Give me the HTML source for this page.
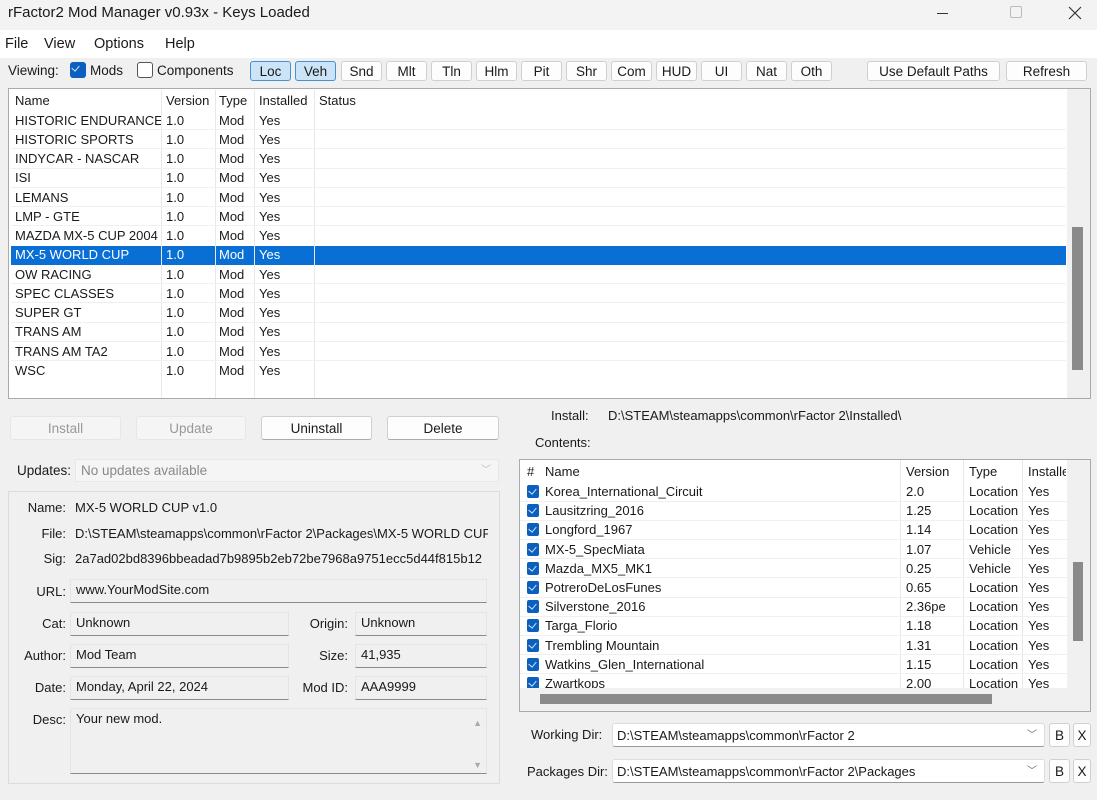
<!DOCTYPE html><html><head><meta charset="utf-8"><style>
*{box-sizing:border-box;margin:0;padding:0}
body{width:1097px;height:800px;background:#f0f0f0;font-family:"Liberation Sans",sans-serif;font-size:13px;color:#1a1a1a;position:relative;overflow:hidden}
.a{position:absolute;white-space:nowrap}
.btn{position:absolute;background:#fdfdfd;border:1px solid #d0d0d0;border-radius:3px;text-align:center;font-size:13.5px}
.tb{height:20px;top:61px;line-height:19px;width:41px}
.fld{position:absolute;background:#f0f0f0;border:1px solid #e4e4e4;border-bottom:1px solid #8a8a8a;padding-left:5px;line-height:20px}
.lbl{position:absolute;text-align:right;white-space:nowrap}
.cb{position:absolute;width:12px;height:13px;background:#0a5fbf;border-radius:2px}
.cb:after{content:"";position:absolute;left:3px;top:2px;width:4px;height:6px;border:solid #cfe3fa;border-width:0 1.2px 1.2px 0;transform:rotate(40deg)}
</style></head><body>
<div class="a" style="left:0;top:0;width:1097px;height:30px;background:#f3f3f3"></div>
<div class="a" style="left:8px;top:4px;font-size:15px">rFactor2 Mod Manager v0.93x - Keys Loaded</div>
<div class="a" style="left:937px;top:13px;width:11px;height:1px;background:#333"></div>
<div class="a" style="left:1010px;top:6px;width:12px;height:12px;border:1px solid #bbb;border-radius:2px"></div>
<svg class="a" style="left:1068px;top:6px" width="14" height="14"><path d="M1 1L13 13M13 1L1 13" stroke="#333" stroke-width="1.2"/></svg>
<div class="a" style="left:0;top:30px;width:1097px;height:28px;background:#fff"></div>
<div class="a" style="left:5px;top:36px;font-size:14.5px">File</div>
<div class="a" style="left:44px;top:36px;font-size:14.5px">View</div>
<div class="a" style="left:94px;top:36px;font-size:14.5px">Options</div>
<div class="a" style="left:165px;top:36px;font-size:14.5px">Help</div>
<div class="a" style="left:8px;top:63px;font-size:13.5px">Viewing:</div>
<div class="cb" style="left:70px;top:62px;width:16px;height:16px;border-radius:3px"></div>
<div class="a" style="left:90px;top:63px;font-size:13.5px">Mods</div>
<div class="a" style="left:137px;top:62px;width:16px;height:16px;border:1px solid #555;border-radius:3px;background:#fff"></div>
<div class="a" style="left:157px;top:63px;font-size:13.5px">Components</div>
<div class="btn tb" style="left:250px;background:#cce4f7;border-color:#4a8fd0">Loc</div>
<div class="btn tb" style="left:295px;background:#cce4f7;border-color:#4a8fd0">Veh</div>
<div class="btn tb" style="left:341px">Snd</div><div class="btn tb" style="left:386px">Mlt</div><div class="btn tb" style="left:431px">Tln</div><div class="btn tb" style="left:476px">Hlm</div><div class="btn tb" style="left:521px">Pit</div><div class="btn tb" style="left:566px">Shr</div><div class="btn tb" style="left:611px">Com</div><div class="btn tb" style="left:656px">HUD</div><div class="btn tb" style="left:701px">UI</div><div class="btn tb" style="left:746px">Nat</div><div class="btn tb" style="left:791px">Oth</div>
<div class="btn tb" style="left:867px;width:133px">Use Default Paths</div>
<div class="btn tb" style="left:1006px;width:81px">Refresh</div>

<div class="a" style="left:8px;top:88px;width:1083px;height:311px;background:#fff;border:1px solid #aaa"></div>
<div class="a" style="left:1067px;top:89px;width:23px;height:309px;background:#f0f0f0"></div>
<div class="a" style="left:1072px;top:227px;width:11px;height:143px;background:#8a8a8a"></div>
<div class="a" style="left:11px;top:246px;width:1055px;height:19px;background:#0a6fd4"></div>
<div class="a" style="left:161px;top:90px;width:1px;height:308px;background:#e8e8e8"></div>
<div class="a" style="left:215px;top:90px;width:1px;height:308px;background:#e8e8e8"></div>
<div class="a" style="left:254px;top:90px;width:1px;height:308px;background:#e8e8e8"></div>
<div class="a" style="left:314px;top:90px;width:1px;height:308px;background:#e8e8e8"></div>
<div id="ml"></div>

<div class="btn" style="left:10px;top:416px;width:111px;height:24px;line-height:23px;color:#999;background:#f5f5f5;border-color:#e6e6e6">Install</div>
<div class="btn" style="left:136px;top:416px;width:110px;height:24px;line-height:23px;color:#999;background:#f5f5f5;border-color:#e6e6e6">Update</div>
<div class="btn" style="left:261px;top:416px;width:111px;height:24px;line-height:23px;border-bottom-color:#aaa">Uninstall</div>
<div class="btn" style="left:387px;top:416px;width:112px;height:24px;line-height:23px;border-bottom-color:#aaa">Delete</div>
<div class="a" style="left:17px;top:463px;font-size:13.5px">Updates:</div>
<div class="a" style="left:75px;top:459px;width:424px;height:23px;background:#f5f5f5;border:1px solid #e8e8e8;color:#888;padding-left:5px;line-height:22px;font-size:13.5px">No updates available<span style="position:absolute;right:7px;color:#bbb;font-size:10px">﹀</span></div>
<div class="a" style="left:8px;top:491px;width:492px;height:293px;border:1px solid #dcdcdc"></div>
<div class="lbl" style="left:10px;width:56px;top:500px">Name:</div><div class="a" style="left:75px;top:500px">MX-5 WORLD CUP v1.0</div>
<div class="lbl" style="left:10px;width:56px;top:526px">File:</div><div class="a" style="left:75px;top:526px;width:413px;overflow:hidden">D:\STEAM\steamapps\common\rFactor 2\Packages\MX-5 WORLD CUP</div>
<div class="lbl" style="left:10px;width:56px;top:551px">Sig:</div><div class="a" style="left:75px;top:551px;width:413px;overflow:hidden">2a7ad02bd8396bbeadad7b9895b2eb72be7968a9751ecc5d44f815b12</div>
<div class="lbl" style="left:10px;width:56px;top:584px">URL:</div><div class="fld" style="left:70px;top:579px;width:417px;height:24px">www.YourModSite.com</div>
<div class="lbl" style="left:10px;width:56px;top:616px">Cat:</div><div class="fld" style="left:70px;top:612px;width:219px;height:24px">Unknown</div>
<div class="lbl" style="left:10px;width:56px;top:648px">Author:</div><div class="fld" style="left:70px;top:644px;width:219px;height:24px">Mod Team</div>
<div class="lbl" style="left:10px;width:56px;top:680px">Date:</div><div class="fld" style="left:70px;top:676px;width:219px;height:24px">Monday, April 22, 2024</div>
<div class="lbl" style="left:290px;width:58px;top:616px">Origin:</div><div class="fld" style="left:355px;top:612px;width:132px;height:24px">Unknown</div>
<div class="lbl" style="left:290px;width:58px;top:648px">Size:</div><div class="fld" style="left:355px;top:644px;width:132px;height:24px">41,935</div>
<div class="lbl" style="left:290px;width:58px;top:680px">Mod ID:</div><div class="fld" style="left:355px;top:676px;width:132px;height:24px">AAA9999</div>
<div class="lbl" style="left:10px;width:56px;top:712px">Desc:</div><div class="fld" style="left:70px;top:708px;width:417px;height:66px;line-height:20px">Your new mod.<span style="position:absolute;right:4px;top:4px;color:#aaa;font-size:9px">▲</span><span style="position:absolute;right:4px;top:46px;color:#aaa;font-size:9px">▼</span></div>

<div class="a" style="left:551px;top:408px">Install:</div>
<div class="a" style="left:608px;top:408px">D:\STEAM\steamapps\common\rFactor 2\Installed\</div>
<div class="a" style="left:535px;top:435px">Contents:</div>
<div class="a" style="left:519px;top:459px;width:572px;height:253px;background:#fff;border:1px solid #aaa"></div>
<div class="a" style="left:1067px;top:460px;width:23px;height:251px;background:#f0f0f0"></div>
<div class="a" style="left:1073px;top:562px;width:10px;height:79px;background:#8a8a8a"></div>
<div class="a" style="left:520px;top:688px;width:547px;height:23px;background:#f0f0f0"></div>
<div class="a" style="left:540px;top:694px;width:452px;height:10px;background:#8a8a8a"></div>
<div class="a" style="left:900px;top:460px;width:1px;height:228px;background:#e8e8e8"></div>
<div class="a" style="left:963px;top:460px;width:1px;height:228px;background:#e8e8e8"></div>
<div class="a" style="left:1022px;top:460px;width:1px;height:228px;background:#e8e8e8"></div>
<div id="cl" class="a" style="left:520px;top:460px;width:547px;height:228px;overflow:hidden"></div>

<div class="a" style="left:531px;top:727px">Working Dir:</div>
<div class="a" style="left:612px;top:723px;width:433px;height:24px;background:#fff;border:1px solid #ddd;border-bottom-color:#999;border-radius:3px;padding-left:4px;line-height:23px">D:\STEAM\steamapps\common\rFactor 2<span style="position:absolute;right:7px;color:#666;font-size:10px">﹀</span></div>
<div class="btn" style="left:1049px;top:723px;width:21px;height:24px;line-height:23px">B</div>
<div class="btn" style="left:1073px;top:723px;width:18px;height:24px;line-height:23px">X</div>
<div class="a" style="left:527px;top:764px">Packages Dir:</div>
<div class="a" style="left:612px;top:759px;width:433px;height:24px;background:#fff;border:1px solid #ddd;border-bottom-color:#999;border-radius:3px;padding-left:4px;line-height:23px">D:\STEAM\steamapps\common\rFactor 2\Packages<span style="position:absolute;right:7px;color:#666;font-size:10px">﹀</span></div>
<div class="btn" style="left:1049px;top:759px;width:21px;height:24px;line-height:23px">B</div>
<div class="btn" style="left:1073px;top:759px;width:18px;height:24px;line-height:23px">X</div>
<script>
var m=["HISTORIC ENDURANCE","HISTORIC SPORTS","INDYCAR - NASCAR","ISI","LEMANS","LMP - GTE","MAZDA MX-5 CUP 2004","MX-5 WORLD CUP","OW RACING","SPEC CLASSES","SUPER GT","TRANS AM","TRANS AM TA2","WSC"];
var h='<div class="a" style="left:15px;top:93px">Name</div><div class="a" style="left:166px;top:93px">Version</div><div class="a" style="left:219px;top:93px">Type</div><div class="a" style="left:259px;top:93px">Installed</div><div class="a" style="left:319px;top:93px">Status</div>';
m.forEach(function(n,i){var t=112.5+19.25*i,c=i==7?'color:#fff;':'';h+='<div class="a" style="'+c+'left:15px;top:'+t+'px;width:146px;overflow:hidden">'+n+'</div><div class="a" style="'+c+'left:166px;top:'+t+'px">1.0</div><div class="a" style="'+c+'left:219px;top:'+t+'px">Mod</div><div class="a" style="'+c+'left:259px;top:'+t+'px">Yes</div>';if(i<13&&i!=6&&i!=7)h+='<div class="a" style="left:11px;top:'+(t+16.5)+'px;width:1055px;height:1px;background:#f0f0f0"></div>'});
document.getElementById('ml').innerHTML=h;
var c=[["Korea_International_Circuit","2.0","Location"],["Lausitzring_2016","1.25","Location"],["Longford_1967","1.14","Location"],["MX-5_SpecMiata","1.07","Vehicle"],["Mazda_MX5_MK1","0.25","Vehicle"],["PotreroDeLosFunes","0.65","Location"],["Silverstone_2016","2.36pe","Location"],["Targa_Florio","1.18","Location"],["Trembling Mountain","1.31","Location"],["Watkins_Glen_International","1.15","Location"],["Zwartkops","2.00","Location"]];
var g='<div class="a" style="left:7px;top:4px">#</div><div class="a" style="left:25px;top:4px">Name</div><div class="a" style="left:386px;top:4px">Version</div><div class="a" style="left:449px;top:4px">Type</div><div class="a" style="left:508px;top:4px;width:38px;overflow:hidden">Installed</div>';
c.forEach(function(r,i){var t=24+19.2*i;g+='<div class="cb" style="left:7px;top:'+(t+1)+'px"></div><div class="a" style="left:25px;top:'+t+'px">'+r[0]+'</div><div class="a" style="left:386px;top:'+t+'px">'+r[1]+'</div><div class="a" style="left:449px;top:'+t+'px">'+r[2]+'</div><div class="a" style="left:508px;top:'+t+'px">Yes</div><div class="a" style="left:0;top:'+(t+16.5)+'px;width:547px;height:1px;background:#f0f0f0"></div>'});
document.getElementById('cl').innerHTML=g;
</script>
</body></html>
